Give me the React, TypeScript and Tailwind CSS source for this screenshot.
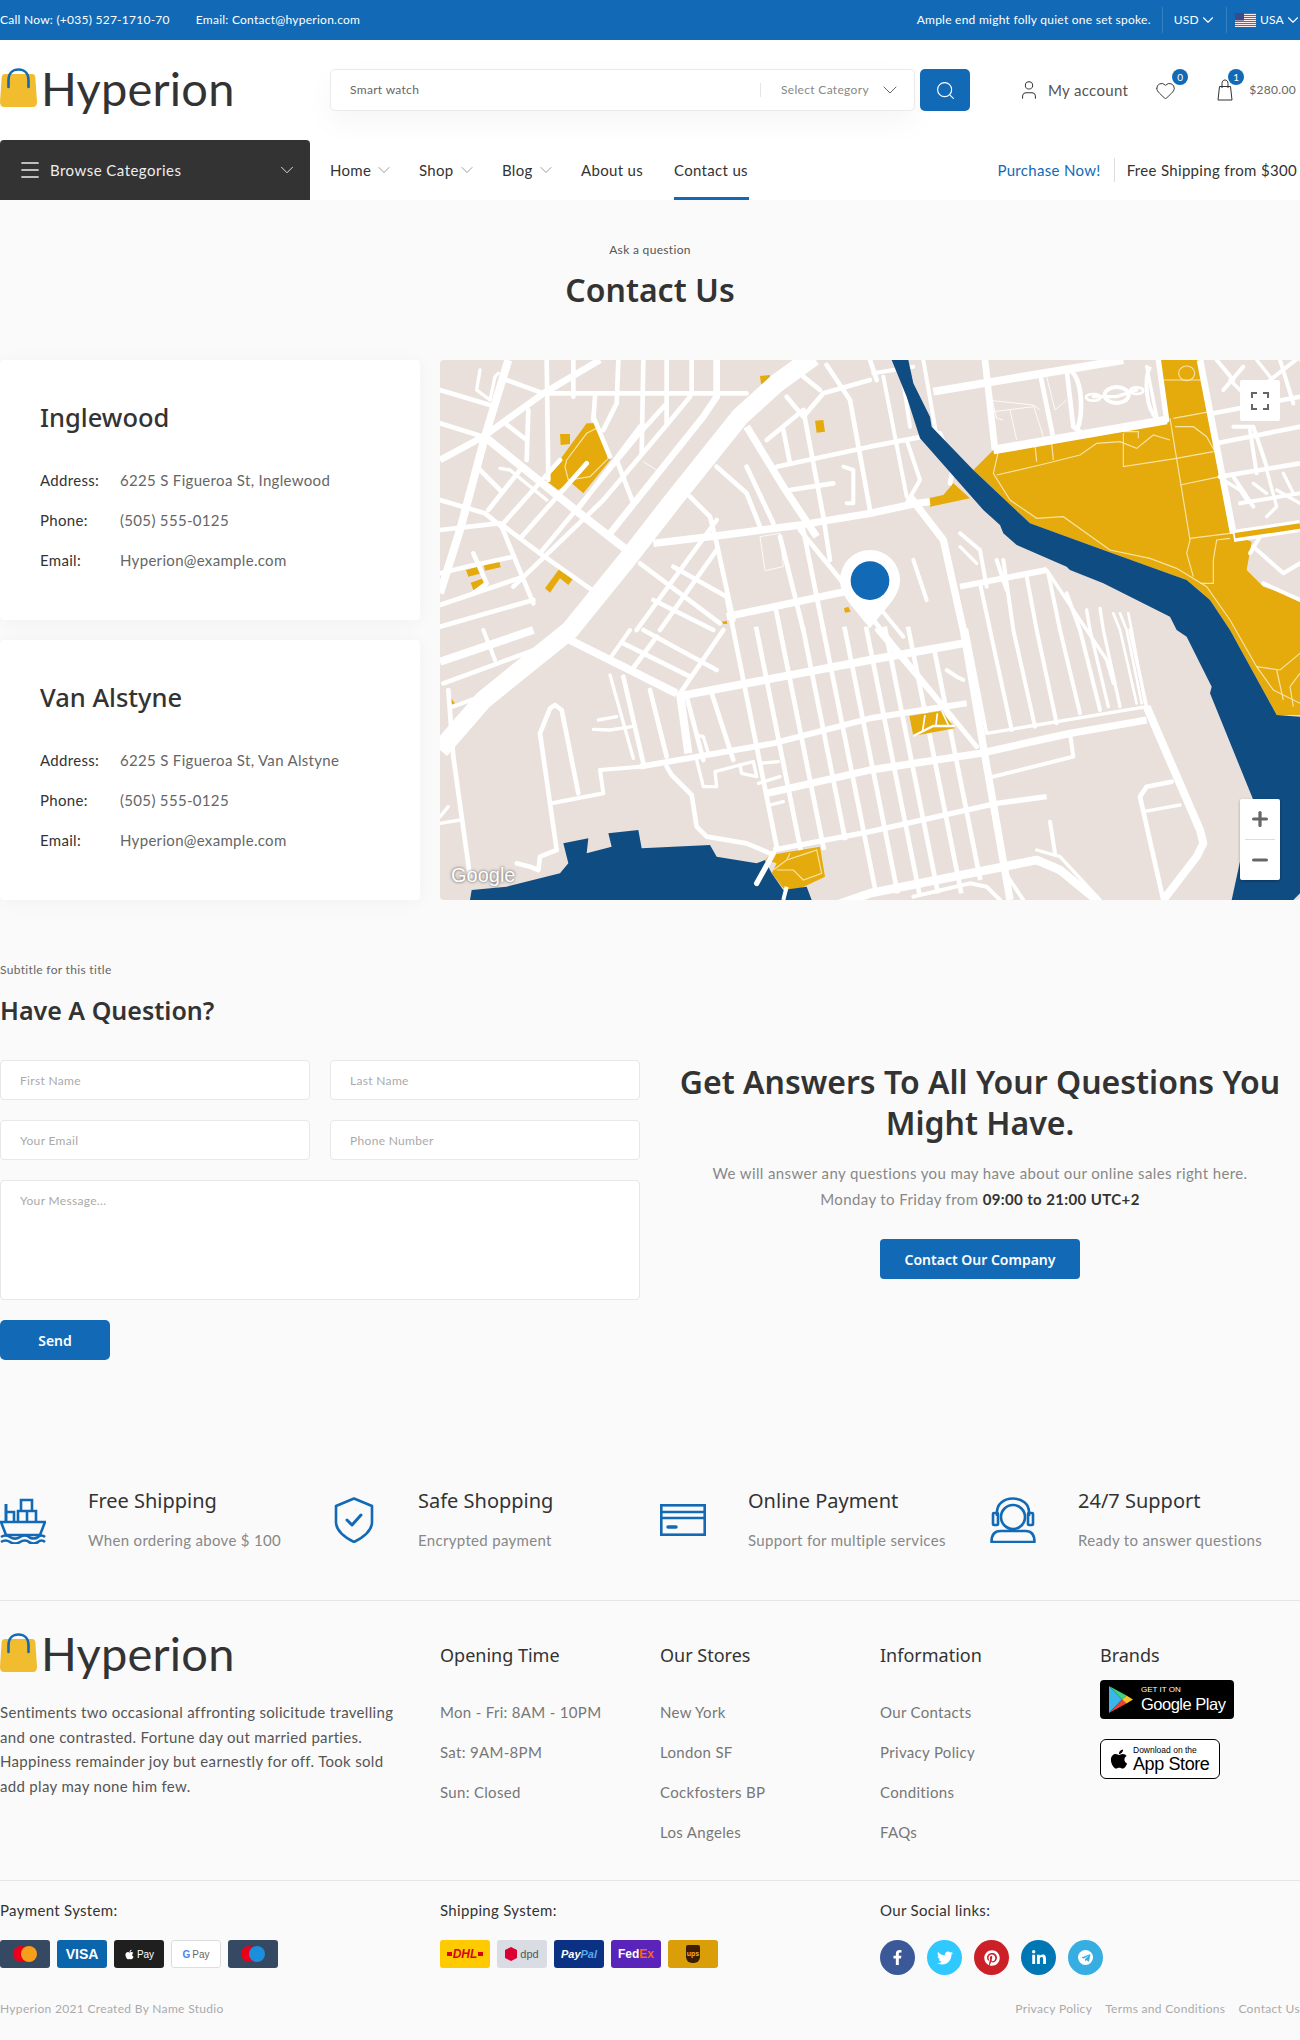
import React from 'react';
import { ChevronDown, Search, User, Heart, Menu, Plus, Minus } from 'lucide-react';
import { FaApple, FaFacebookF, FaTwitter, FaPinterest, FaLinkedinIn, FaTelegramPlane } from 'react-icons/fa';

const heading = "[font-family:'Noto_Sans',sans-serif] tracking-normal";

// map data, in units of 1/3 px over the 860x540 map
const mainRoads: [number, string][] = [
  [56, '1120,-10 1010,70 900,170 700,420 560,600 390,810 130,1020 0,1170'],
  [24, '205,0 135,230 60,510 0,700'],
  [20, '0,300 130,230 310,100 480,0'],
  [24, '140,235 400,445 560,570'],
  [22, '640,550 850,525 1080,495 1290,460 1430,430 1470,425'],
  [22, '920,200 1030,380 1130,530'],
  [22, '1410,410 1510,540 1570,810 1630,1160 1710,1620'],
  [22, '860,770 1190,700 1300,680'],
  [24, '710,1010 1290,900 1570,850'],
  [24, '390,840 710,1000'],
  [18, '600,1220 1000,1150 1290,1075 1580,1030'],
  [22, '980,1300 1290,1230 1620,1180 1890,1120 2120,1080'],
  [16, '1000,1470 1290,1415 1670,1330 1820,1310'],
  [26, '1000,1700 1290,1600 1690,1520 1790,1500 1860,1530 1970,1620'],
  [24, '2120,1040 2150,1110 2280,1410 2290,1450 2270,1490 2170,1620'],
  [24, '0,905 280,810'],
  [24, '1480,95 2050,0'],
  [20, '1635,0 1665,270'],
  [26, '1660,270 2180,180'],
  [20, '2280,0 2380,520'],
  [18, '1560,680 1820,630'],
  [24, '720,1000 745,1180'],
];

const minorRoads: [number, string][] = [
  [14, '0,90 150,135'], [14, '0,190 130,230'], [14, '320,0 325,360'], [14, '200,60 310,100 920,100'],
  [14, '400,0 400,110'], [14, '465,110 460,180'], [14, '535,0 530,130 490,210'], [14, '610,0 605,280'],
  [14, '680,0 680,190'], [14, '755,0 755,100'], [20, '830,0 830,110 790,170 510,520'], [14, '750,110 680,195 490,420 220,680'],
  [14, '145,450 240,330'], [14, '190,490 360,300'], [14, '245,530 440,310'], [14, '300,580 590,230 680,130'],
  [14, '420,440 600,200'], [14, '280,730 185,500 135,460 0,420'], [14, '0,510 175,490'], [14, '0,640 80,620 220,590'],
  [14, '0,735 250,650'], [14, '0,800 280,720'], [14, '180,490 300,580 470,700'], [14, '100,580 140,670 100,700'],
  [14, '110,320 180,390'], [10, '180,325 210,330 320,420'], [10, '120,30 110,90 150,120 165,50 175,40'],
  [14, '195,190 260,240'], [14, '265,150 260,300'], [14, '530,300 580,430'], [14, '460,170 510,290'],
  [14, '1040,110 1090,170 1150,100 1290,60'], [14, '1090,50 1140,90'], [14, '980,240 1090,150'], [14, '1010,320 1290,260'],
  [14, '1050,390 1180,370'], [14, '1160,15 1230,120 1290,450'], [14, '920,320 1000,490'], [14, '830,320 920,400 960,500'],
  [14, '750,410 810,470 830,550 880,780'], [14, '1030,210 1050,310'], [14, '1090,150 1150,470 1170,600'],
  [14, '1020,530 1090,810'], [14, '1090,510 1150,810'], [14, '600,610 840,790'], [14, '590,810 830,480'],
  [14, '700,620 860,710'], [14, '660,810 830,570'], [14, '640,720 820,810'], [14, '1080,510 1610,1160'],
  [14, '1290,0 1310,60'], [14, '1290,260 1500,220 1540,320 1530,370'], [12, '1400,240 1440,360 1400,430'],
  [12, '1210,320 1240,330 1240,430 1220,430'], [12, '1560,520 1620,570 1640,680'], [12, '1670,600 1700,690'],
  [12, '1300,40 1420,20'], [12, '1380,0 1410,200'], [12, '1330,50 1400,410'], [12, '1450,0 1490,230'],
  [12, '1420,600 1460,720'], [12, '1300,720 1390,830'],
  // peninsula and lower left
  [10, '510,945 580,1195'], [14, '550,950 610,1210'], [14, '630,990 680,1190'], [10, '530,1070 475,1080'],
  [10, '575,1100 510,1110 460,1108'], [12, '480,1230 600,1220'], [12, '480,1230 490,1300 335,1330'],
  [14, '415,1300 365,1050 345,1035 330,1045 300,1120 350,1470 300,1490 295,1530'], [14, '25,990 40,1190 90,1550'],
  [10, '0,1390 60,1380'], [10, '0,1370 25,1340'], [14, '680,1220 695,1245 755,1305 770,1400 800,1430 920,1450 990,1480'],
  [10, '770,1200 790,1280 830,1280 825,1235 900,1215 940,1205 950,1250 905,1240 900,1215'],
  [10, '955,1270 1020,1250'], [10, '960,1210 1015,1205'], [10, '990,1335 1030,1325'], [10, '770,1125 790,1130 805,1180'],
  [12, '130,810 165,900'], [14, '10,970 310,860'], [12, '40,1040 170,990'], [12, '510,895 570,810'],
  [14, '550,850 750,950'], [14, '610,810 830,930'], [14, '575,930 650,830'], [14, '720,1000 850,810'],
  [14, '740,1010 790,1200'], [14, '815,1000 880,1200'], [14, '230,1510 270,1520 295,1530'],
  // right of the grid
  [10, '1580,810 1640,1120 2120,1040 2070,810'], [10, '1820,630 1920,780 2000,900 2020,970'],
  [12, '1620,670 1650,810 1715,1110'], [12, '1690,600 1720,810 1785,1100'], [12, '1760,650 1790,810 1850,1090'],
  [12, '1825,640 1860,810 1920,1060'], [12, '1880,700 1920,810 1980,1050'], [10, '1940,750 1950,810 2005,1040'],
  [10, '1980,745 1990,810 2040,1040'], [8, '2020,760 2040,810 2090,1030'], [8, '2040,760 2060,810 2105,1030'],
  [8, '2065,760 2075,810 2115,1030'], [12, '1890,1120 1900,1190 1660,1250'], [12, '1830,1385 1845,1480'],
  [10, '1790,1470 1860,1490 1980,1620'], [12, '1310,810 1610,1160'], [12, '1420,1610 1590,1570 1640,1580 1680,1620'],
  [14, '2195,1265 2120,1280 2100,1310 2170,1620'], [10, '2110,1355 2220,1335'], [12, '1690,1530 1750,1620'],
  [12, '1520,930 1550,950 1570,960'], [10, '1560,560 1610,610'],
  // top right, above the park and past it
  [14, '1880,30 1900,200 1920,215'], [14, '1800,40 1840,235'], [16, '2155,0 2180,180'],
  [10, '1960,110 2030,110 2090,90'], [10, '2120,20 2150,170'], [14, '2320,160 2580,110'], [14, '2330,250 2580,200'],
  [14, '2340,350 2580,310'], [12, '2490,60 2580,-10'], [12, '2350,90 2410,20'],
  [12, '2330,0 2380,60'], [12, '2380,200 2440,200 2480,320'], [12, '2520,0 2560,130'], [12, '2430,210 2450,340'],
  [12, '2400,430 2580,400'], [12, '2380,350 2440,440'], [10, '2480,330 2510,440 2480,470'], [12, '2440,560 2530,640 2580,610'],
  [12, '2470,670 2580,720'], [12, '2430,580 2460,530'], [10, '2510,390 2580,430'], [10, '2350,360 2400,390 2420,420'],
  [10, '2440,370 2480,400'], [10, '2530,340 2560,400'], [10, '2450,0 2490,50'], [10, '2370,60 2430,120'],
];

const gridStreets: [number, number, number][] = [
  [880, 700, 1470], [950, 800, 1470], [1020, 750, 1470], [1090, 800, 1440], [1150, 800, 1600], [1215, 800, 1600],
  [1280, 800, 1600], [1336, 800, 1600], [1406, 800, 1600], [1471, 860, 1560],
];

const parks: string[] = [
  '315,360 440,190 470,190 515,295 430,400 390,365 355,390',
  '360,222 390,222 390,252 362,255',
  '960,48 990,45 988,65 963,72',
  '1125,182 1150,180 1155,215 1130,218',
  '315,685 357,628 398,658 385,675 360,655 330,698',
  '78,630 120,618 125,640 85,650',
  '130,610 178,605 182,622 135,632',
  '92,668 130,655 140,675 100,690',
  '1212,745 1225,740 1232,755 1215,758',
  '845,785 860,782 862,792 850,792',
  '25,1005 45,1030 30,1035',
  // big park on the right
  '1660,270 2180,185 2160,0 2275,0 2370,520 2435,545 2420,630 2470,680 2580,720 2580,1065 2510,1065 2370,810 2310,720 2240,660 1990,570 1770,490 1600,330',
  '1540,370 1590,415 1470,440 1465,415 1510,405',
  '975,1500 990,1485 1140,1460 1155,1550 1060,1595 1030,1585 995,1540 1010,1510',
];

const parkPaths: string[] = [
  '380,300 440,220 470,205 490,240 505,295 450,350 385,360 375,320 380,300',
  '2172,60 2290,60', '2200,175 2310,155', '1675,275 1660,340 1710,420 1790,475 1870,470 2010,570 2130,595 2210,625 2300,680 2370,780 2450,920 2500,990 2580,1030',
  '1670,345 1800,315 1920,285 1970,250 2040,245 2090,265 2140,225 2190,240', '1785,255 1790,305', '1835,250 1840,300',
  '2050,215 2095,215 2095,235', '2050,220 2050,320 2210,295 2320,275', '2190,175 2250,540 2240,580 2260,650',
  '2205,200 2260,200 2300,230 2325,275', '2220,375 2340,350', '2250,535 2370,520', '2370,535 2330,540 2320,600 2320,670 2280,670',
  '2450,920 2520,930 2580,880', '2510,930 2530,1020', '2580,940 2550,980 2560,1040',
  '1000,1530 1040,1500 1100,1480 1130,1470 1145,1540 1090,1560 1060,1530 1010,1530', '1040,1500 1050,1480',
];

const thinLines: string[] = [
  '610,305 650,330', '960,530 1020,520 1030,620 975,632 960,530', '1640,120 1780,135 1800,150', '1660,155 1780,140',
  '1710,150 1730,240', '1780,135 1810,230', '1820,50 1845,150 1880,120', '1650,90 1670,175 1690,180',
];

const MapDrawing: React.FC = () => (
  <svg viewBox="0 0 2580 1620" className="w-full h-full block">
    <rect width="2580" height="1620" fill="#e9e0db" />
    {parks.map((p, i) => <polygon key={i} points={p} fill="#e5ab0c" />)}
    {parkPaths.map((p, i) => <polyline key={i} points={p} fill="none" stroke="#f7e3a6" strokeWidth="3.5" />)}
    {minorRoads.map(([w, p], i) => <polyline key={i} points={p} fill="none" stroke="#fff" strokeWidth={w} strokeLinejoin="round" strokeLinecap="round" />)}
    {gridStreets.map(([x, y0, y1], i) => (
      <line key={i} x1={x + (y0 - 810) * 0.2} y1={y0} x2={x + (y1 - 810) * 0.2} y2={y1} stroke="#fff" strokeWidth="14" />
    ))}
    {mainRoads.map(([w, p], i) => <polyline key={i} points={p} fill="none" stroke="#fff" strokeWidth={w} strokeLinejoin="round" />)}
    {thinLines.map((p, i) => <polyline key={i} points={p} fill="none" stroke="#fff" strokeWidth="2.5" />)}
    {/* small square with paths, over the grid */}
    <polygon points="1408,1068 1505,1052 1545,1105 1420,1128" fill="#e5ab0c" />
    <polyline points="1420,1128 1480,1098 1545,1098" fill="none" stroke="#fff" strokeWidth="7" />
    <polyline points="1455,1065 1448,1112" fill="none" stroke="#fff" strokeWidth="5" />
    <polyline points="1492,1060 1488,1095" fill="none" stroke="#fff" strokeWidth="5" />
    <polyline points="1505,1052 1525,1095" fill="none" stroke="#fff" strokeWidth="5" />
    {/* road with a stripe of park down its middle */}
    <polyline points="2380,528 2580,498" fill="none" stroke="#fff" strokeWidth="36" />
    <polyline points="2385,527 2580,498" fill="none" stroke="#e5ab0c" strokeWidth="16" />
    {/* ring road beside the park */}
    <ellipse cx="2030" cy="105" rx="36" ry="24" fill="none" stroke="#fff" strokeWidth="12" />
    <ellipse cx="1960" cy="112" rx="22" ry="10" fill="none" stroke="#fff" strokeWidth="8" />
    <ellipse cx="2090" cy="92" rx="20" ry="10" fill="none" stroke="#fff" strokeWidth="8" />
    <path d="M1890 30 C1930 60 1930 170 1910 210" fill="none" stroke="#fff" strokeWidth="14" />
    <path d="M2130 20 C2110 60 2120 150 2150 175" fill="none" stroke="#fff" strokeWidth="12" />
    <ellipse cx="2240" cy="40" rx="24" ry="22" fill="none" stroke="#f7e3a6" strokeWidth="3.5" />
    {/* river and harbour */}
    <polygon
      fill="#0f4c81"
      points="1355,0 1405,0 1420,70 1470,170 1475,200 1600,330 1770,490 1990,570 2240,660 2310,720 2370,810 2510,1065 2580,1070 2580,1600 2560,1620 2375,1620 2440,1320 2310,1000 2315,980 2240,830 2210,810 2190,770 1990,670 1890,630 1880,620 1730,555 1690,520 1680,495 1630,450 1440,235 1400,110"
    />
    <polygon
      fill="#0f4c81"
      points="95,1590 200,1580 360,1540 385,1510 370,1450 445,1435 440,1480 515,1460 505,1420 595,1410 605,1465 810,1455 830,1490 950,1510 975,1500 995,1540 1030,1590 1100,1580 1115,1620 90,1620"
    />
    <polyline points="1000,1480 950,1570" fill="none" stroke="#fff" strokeWidth="16" strokeLinecap="round" />
    <polyline points="1040,1580 1030,1620" fill="none" stroke="#fff" strokeWidth="12" />
    {/* pin */}
    <path d="M1290 805 C1230 730 1200 705 1200 660 A90 90 0 0 1 1380 660 C1380 705 1350 730 1290 805Z" fill="#fff" />
    <circle cx="1290" cy="662" r="58" fill="#126ab6" />
  </svg>
);

const Logo: React.FC = () => (
  <div className="flex items-start h-[57px] w-[240px]">
    <svg width="37" height="40" viewBox="0 0 37 40">
      <path d="M5 6h27c2 0 3 1 3.300 3l1.700 25c0 3-1.500 5-4 5H4c-2.500 0-4-2-4-5L1.700 9C2 7 3 6 5 6Z" fill="#f2bc2f" />
      <path d="M8.500 19 V12 C8.500 5 13 1.500 18.500 1.500 C24 1.500 28.500 5 28.500 12 V19" fill="none" stroke="#126ab6" strokeWidth="2.600" strokeLinecap="round" />
    </svg>
    <span className="ml-[4px] -mt-[5px] text-[47px] leading-[50px] font-normal text-[#333] tracking-[0.2px]">Hyperion</span>
  </div>
);

const Flag: React.FC = () => (
  <svg width="21" height="14" viewBox="0 0 21 14" className="block">
    <rect width="21" height="14" fill="#fff" />
    {[0, 2, 4, 6, 8, 10, 12].map(y => <rect key={y} y={y} width="21" height="1.100" fill="#e0393e" />)}
    <rect width="9" height="7.500" fill="#3d4a8a" />
  </svg>
);

const TopBar: React.FC = () => (
  <div className="h-10 bg-[#126ab6] text-white text-[12px] tracking-[0.25px] flex items-center justify-between">
    <div className="flex gap-[26px]">
      <span>Call Now: (+035) 527-1710-70</span>
      <span>Email: Contact@hyperion.com</span>
    </div>
    <div className="flex items-center h-[26px]">
      <span>Ample end might folly quiet one set spoke.</span>
      <span className="w-px h-[26px] bg-white/15 ml-[11px]" />
      <span className="ml-[11px] flex items-center">USD <ChevronDown size={18} strokeWidth={1.500} /></span>
      <span className="w-px h-[26px] bg-white/15 ml-[9px]" />
      <span className="ml-[8px]"><Flag /></span>
      <span className="ml-[4px] -mr-[2px] flex items-center">USA <ChevronDown size={18} strokeWidth={1.500} /></span>
    </div>
  </div>
);

const Header: React.FC = () => (
  <div className="h-[100px] bg-white flex pt-[29px]">
    <div className="-mt-[1px]"><Logo /></div>
    <div className="ml-[90px] w-[585px] h-[42px] bg-white border border-[#eaeaea] rounded-[5px] flex items-center shadow-[0_12px_30px_rgba(0,0,0,0.04)] text-[12px]">
      <span className="ml-[19px] w-[410px] text-[#666]">Smart watch</span>
      <span className="w-px h-[14px] bg-[#e5e5e5]" />
      <span className="ml-[20px] w-[97px] text-[#888]">Select Category</span>
      <ChevronDown size={24} strokeWidth={1} className="text-[#666]" />
    </div>
    <button className="ml-[5px] w-[50px] h-[42px] bg-[#126ab6] rounded-[5px] flex items-center justify-center text-white">
      <Search size={21} strokeWidth={1.300} />
    </button>
    <div className="ml-[48px] h-[42px] flex items-center text-[#555]">
      <User size={22} strokeWidth={1.100} className="text-[#333]" />
      <span className="ml-[8px] text-[15px]">My account</span>
    </div>
    <div className="ml-[27px] h-[42px] flex items-center relative">
      <Heart size={21} strokeWidth={1.100} className="text-[#333]" />
      <span className="absolute left-[17px] top-0 w-4 h-4 rounded-full bg-[#126ab6] text-white text-[10px] tracking-normal flex items-center justify-center">0</span>
    </div>
    <div className="ml-[41px] h-[42px] flex items-center relative">
      <svg width="16" height="22" viewBox="0 0 16 22" fill="none" stroke="#333" strokeWidth="1">
        <path d="M2.500 7.500h11L15 21H1Z" />
        <path d="M5 9V4.500C5 2 6.500 1 8 1s3 1 3 3.500V9" />
      </svg>
      <span className="absolute left-[11px] top-0 w-4 h-4 rounded-full bg-[#126ab6] text-white text-[10px] tracking-normal flex items-center justify-center">1</span>
      <span className="ml-[16px] text-[12px] text-[#666]">$280.00</span>
    </div>
  </div>
);

const NavItem: React.FC<{ label: string; className: string }> = ({ label, className }) => (
  <div className={`flex items-center gap-[3px] ${className}`}>
    {label}
    <ChevronDown size={20} strokeWidth={1} className="text-[#888]" />
  </div>
);

const NavBar: React.FC = () => (
  <div className="h-[60px] bg-white flex items-center text-[15px] text-[#333] relative pr-[3px]">
    <div className="w-[310px] h-[60px] bg-[#333] rounded-t-[4px] text-[#eee] flex items-center pl-[18px]">
      <Menu size={24} strokeWidth={1.700} />
      <span className="ml-[8px] w-[226px] tracking-[0.47px]">Browse Categories</span>
      <ChevronDown size={22} strokeWidth={1} />
    </div>
    <NavItem label="Home" className="ml-[20px] w-[89px]" />
    <NavItem label="Shop" className="w-[83px]" />
    <NavItem label="Blog" className="w-[79px]" />
    <div className="w-[93px]">About us</div>
    <div className="w-[75px] h-[60px] flex items-center border-b-[3px] border-[#126ab6] whitespace-nowrap pt-[3px]">Contact us</div>
    <div className="ml-auto text-[#126ab6] whitespace-nowrap">Purchase Now!</div>
    <span className="ml-[13px] w-px h-6 bg-[#ddd]" />
    <div className="ml-[12px] whitespace-nowrap">Free Shipping from $300</div>
  </div>
);

const rowClass = 'flex h-[40px] items-center text-[15px]';

const StoreCard: React.FC<{ title: string; address: string }> = ({ title, address }) => (
  <div className="w-[420px] h-[260px] bg-white rounded-[4px] shadow-[0_2px_20px_rgba(0,0,0,0.04)] pl-10 pt-[37px]">
    <h3 className={`${heading} text-[25.500px] leading-[40px] font-medium text-[#333] mb-[23px]`}>{title}</h3>
    <div className={rowClass}><span className="w-20 text-[#333]">Address:</span><span className="text-[#666]">{address}</span></div>
    <div className={rowClass}><span className="w-20 text-[#333]">Phone:</span><span className="text-[#666]">(505) 555-0125</span></div>
    <div className={rowClass}><span className="w-20 text-[#333]">Email:</span><span className="text-[#666]">Hyperion@example.com</span></div>
  </div>
);

const MapPanel: React.FC = () => (
  <div className="ml-5 w-[860px] h-[540px] relative overflow-hidden rounded-[4px]">
    <MapDrawing />
    <div className="absolute top-[20px] right-[20px] w-10 h-[41px] bg-white rounded-[2px] flex items-center justify-center">
      <svg width="18" height="18" viewBox="0 0 18 18" fill="none" stroke="#666" strokeWidth="2">
        <path d="M1 6V1h5M12 1h5v5M17 12v5h-5M6 17H1v-5" />
      </svg>
    </div>
    <div className="absolute bottom-[20px] right-[20px] w-10 h-[81px] bg-white rounded-[2px] shadow-[0_1px_3px_rgba(0,0,0,0.3)] flex flex-col items-center text-[#666]">
      <div className="h-10 flex items-center justify-center"><Plus size={22} strokeWidth={3.500} /></div>
      <div className="w-[30px] h-px bg-[#ddd]" />
      <div className="h-10 flex items-center justify-center"><Minus size={22} strokeWidth={3.500} /></div>
    </div>
    <span className="absolute left-[11px] bottom-[12px] text-[20px] leading-[26px] tracking-normal text-white [font-family:'Liberation_Sans',sans-serif] [text-shadow:0_0_3px_rgba(0,0,0,0.7)]">Google</span>
  </div>
);

const inputClass = 'h-10 bg-white border border-[#e8e8e8] rounded-[4px] flex items-center pl-[19px] pt-px text-[12px] text-[#aaa]';

const QuestionForm: React.FC = () => (
  <div className="w-[640px]">
    <p className="text-[12px] leading-[16px] text-[#666]">Subtitle for this title</p>
    <h2 className={`${heading} text-[25px] leading-[32px] font-semibold text-[#333] mt-[16px]`}>Have A Question?</h2>
    <div className="grid grid-cols-2 gap-x-5 gap-y-5 mt-[34px]">
      <div className={inputClass}>First Name</div>
      <div className={inputClass}>Last Name</div>
      <div className={inputClass}>Your Email</div>
      <div className={inputClass}>Phone Number</div>
      <div className="col-span-2 h-[120px] bg-white border border-[#e8e8e8] rounded-[4px] pl-[19px] pt-[11px] text-[12px] text-[#aaa]">Your Message...</div>
    </div>
    <button className={`${heading} mt-5 w-[110px] h-10 bg-[#126ab6] rounded-[5px] text-white text-[14px] font-semibold`}>Send</button>
  </div>
);

const AnswersPanel: React.FC = () => (
  <div className="ml-5 w-[640px] pt-[99px] text-center">
    <h2 className={`${heading} text-[32px] leading-[41px] font-semibold text-[#333]`}>Get Answers To All Your Questions You<br />Might Have.</h2>
    <p className="mt-[17px] text-[15px] leading-[26px] text-[#888] tracking-[0.38px]">
      We will answer any questions you may have about our online sales right here.<br />
      Monday to Friday from <span className="font-bold text-[#333]">09:00 to 21:00 UTC+2</span>
    </p>
    <button className={`${heading} mt-[27px] w-[200px] h-10 bg-[#126ab6] rounded-[4px] text-white text-[14px] font-semibold`}>Contact Our Company</button>
  </div>
);

const ShipIcon = () => (
  <svg width="46" height="48" viewBox="0 0 46 48" fill="none" stroke="#126ab6" strokeWidth="2.600">
    <path d="M6 26V8" strokeWidth="3" />
    <path d="M5 16h9v10" />
    <path d="M18 26V15h9v11M21 15V4h11v11M27 15h9v11" />
    <path d="M1 26h44l-5 13H6Z" />
    <path d="M1 41c3-2 6-2 9 0s7 2 10 0 7-2 9 0 7 2 9 0 5-2 7 0M1 46c3-2 6-2 9 0s7 2 10 0 7-2 9 0 7 2 9 0 5-2 7 0" />
  </svg>
);

const ShieldIcon = () => (
  <svg width="40" height="46" viewBox="0 0 40 46" fill="none" stroke="#126ab6" strokeWidth="2.600" strokeLinejoin="round" strokeLinecap="round">
    <path d="M20 1.500 38 9v16c0 9-8 15-18 20C10 40 2 34 2 25V9Z" />
    <path d="M13 23l5 5 9-10" strokeWidth="3" />
  </svg>
);

const CardIcon = () => (
  <svg width="46" height="32" viewBox="0 0 46 32" fill="none" stroke="#126ab6" strokeWidth="2.600">
    <rect x="1.300" y="1.300" width="43.400" height="29.400" />
    <path d="M1 8h44M1 14h44" />
    <path d="M8 23h8" strokeWidth="3.500" strokeLinecap="round" />
  </svg>
);

const SupportIcon = () => (
  <svg width="46" height="46" viewBox="0 0 46 46" fill="none" stroke="#126ab6" strokeWidth="2.600" strokeLinejoin="round">
    <path d="M7 19v-4C7 7 14 1.500 23 1.500S39 7 39 15v4" />
    <rect x="3" y="16" width="5" height="12" rx="1" />
    <rect x="38" y="16" width="5" height="12" rx="1" />
    <circle cx="23" cy="20" r="12" />
    <path d="M1.500 45c0-8 4-11 9-11h25c5 0 9 3 9 11Z" />
  </svg>
);

const features = [
  { title: 'Free Shipping', text: 'When ordering above $ 100', icon: <ShipIcon />, box: 'w-[88px]' },
  { title: 'Safe Shopping', text: 'Encrypted payment', icon: <ShieldIcon />, box: 'w-[88px] pl-[4px]' },
  { title: 'Online Payment', text: 'Support for multiple services', icon: <CardIcon />, box: 'w-[88px]' },
  { title: '24/7 Support', text: 'Ready to answer questions', icon: <SupportIcon />, box: 'w-[88px]' },
];

const Features: React.FC = () => (
  <div className="h-[131px] border-b border-[#e6e6e6] grid grid-cols-[330px_330px_330px_310px] pt-[17px]">
    {features.map(f => (
      <div key={f.title} className="flex">
        <div className={`${f.box} h-[65px] flex items-center`}>{f.icon}</div>
        <div>
          <p className={`${heading} text-[20px] leading-[28px] text-[#333]`}>{f.title}</p>
          <p className="mt-[15px] text-[15px] leading-[20px] text-[#888]">{f.text}</p>
        </div>
      </div>
    ))}
  </div>
);

const FooterCol: React.FC<{ title: string; items: string[] }> = ({ title, items }) => (
  <div className="w-[220px]">
    <h4 className={`${heading} text-[18px] leading-[26px] text-[#333]`}>{title}</h4>
    <ul className="mt-[24px] text-[15px] text-[#777]">
      {items.map(i => <li key={i} className="h-10 flex items-center">{i}</li>)}
    </ul>
  </div>
);

const GooglePlayBadge = () => (
  <div className="w-[134px] h-[39px] bg-black rounded-[4px] flex items-center pl-[9px] text-white tracking-normal">
    <svg width="24" height="27" viewBox="0 0 24 27">
      <path d="M0 0 13 13.500 0 27Z" fill="#3bb6e8" />
      <path d="M0 0 17.500 9.500 13 13.500Z" fill="#3fd37c" />
      <path d="M0 27 17.500 17.500 13 13.500Z" fill="#ea4335" />
      <path d="M17.500 9.500 24 13.500 17.500 17.500 13 13.500Z" fill="#fbc02d" />
    </svg>
    <div className="ml-[8px] [font-family:'Liberation_Sans',sans-serif]">
      <p className="text-[8px] leading-[9px]">GET IT ON</p>
      <p className="text-[16.500px] leading-[20px] tracking-[-0.5px]">Google Play</p>
    </div>
  </div>
);

const AppStoreBadge = () => (
  <div className="w-[120px] h-[40px] bg-white border border-black rounded-[6px] flex items-center pl-[7px] text-black tracking-normal">
    <FaApple size={22} />
    <div className="ml-[3px] [font-family:'Liberation_Sans',sans-serif]">
      <p className="text-[8.500px] leading-[10px]">Download on the</p>
      <p className="text-[18px] leading-[19px] tracking-[-0.4px] font-medium">App Store</p>
    </div>
  </div>
);

const Circles: React.FC<{ left: string; right: string }> = ({ left, right }) => (
  <svg width="24" height="16" viewBox="0 0 24 16">
    <circle cx="8" cy="8" r="8" fill={left} />
    <circle cx="16" cy="8" r="8" fill={right} />
  </svg>
);

const payBox = 'w-[50px] h-[28px] rounded-[3px] flex items-center justify-center tracking-normal [font-family:\'Liberation_Sans\',sans-serif]';

const Footer: React.FC = () => (
  <div>
    <div className="h-[280px] border-b border-[#e6e6e6] flex pt-[32px]">
      <div className="w-[440px]">
        <Logo />
        <p className="mt-[10px] text-[15px] leading-[24.600px] text-[#555] whitespace-nowrap">
          Sentiments two occasional affronting solicitude travelling<br />
          and one contrasted. Fortune day out married parties.<br />
          Happiness remainder joy but earnestly for off. Took sold<br />
          add play may none him few.
        </p>
      </div>
      <div className="flex pt-[9px]">
        <FooterCol title="Opening Time" items={['Mon - Fri: 8AM - 10PM', 'Sat: 9AM-8PM', 'Sun: Closed']} />
        <FooterCol title="Our Stores" items={['New York', 'London SF', 'Cockfosters BP', 'Los Angeles']} />
        <FooterCol title="Information" items={['Our Contacts', 'Privacy Policy', 'Conditions', 'FAQs']} />
        <div>
          <h4 className={`${heading} text-[18px] leading-[26px] text-[#333]`}>Brands</h4>
          <div className="mt-[12px] flex flex-col gap-5">
            <GooglePlayBadge />
            <AppStoreBadge />
          </div>
        </div>
      </div>
    </div>
    <div className="flex pt-[19px] h-[107px]">
      <div className="w-[440px]">
        <p className="text-[15px] leading-[20px] text-[#333]">Payment System:</p>
        <div className="flex gap-[7px] mt-[20px]">
          <div className={`${payBox} bg-[#364962]`}><Circles left="#eb001b" right="#f79e1b" /></div>
          <div className={`${payBox} bg-[#0b65ad] text-white text-[14px] font-bold`}>VISA</div>
          <div className={`${payBox} bg-[#1f1f1f] text-white text-[10px] gap-[2px]`}><FaApple size={11} />Pay</div>
          <div className={`${payBox} bg-white border border-[#ddd] text-[#666] text-[10px] gap-[2px]`}><span className="text-[#4285f4] font-bold">G</span>Pay</div>
          <div className={`${payBox} bg-[#364962]`}><Circles left="#eb001b" right="#1b8fdc" /></div>
        </div>
      </div>
      <div className="w-[440px]">
        <p className="text-[15px] leading-[20px] text-[#333]">Shipping System:</p>
        <div className="flex gap-[7px] mt-[20px]">
          <div className={`${payBox} bg-[#ffcb00] text-[#d40511] text-[12px] font-bold italic gap-[1px]`}>
            <span className="w-[5px] h-[4px] bg-[#d40511]" />DHL<span className="w-[5px] h-[4px] bg-[#d40511]" />
          </div>
          <div className={`${payBox} bg-[#d9dce3] text-[#555] text-[11px] gap-[3px]`}>
            <svg width="12" height="14" viewBox="0 0 12 14"><path d="M6 0l6 3v8l-6 3-6-3V3Z" fill="#dc0032" /></svg>dpd
          </div>
          <div className={`${payBox} bg-[#0a3184] text-[11px] font-bold italic`}><span className="text-white">Pay</span><span className="text-[#5aa9e6]">Pal</span></div>
          <div className={`${payBox} bg-[#5a23b9] text-[12px] font-bold`}><span className="text-white">Fed</span><span className="text-[#ff6600]">Ex</span></div>
          <div className={`${payBox} bg-[#d99e08]`}>
            <div className="w-[14px] h-[18px] bg-[#3b1d06] rounded-b-[6px] rounded-t-[2px] flex items-center justify-center text-[#f2b51c] text-[7px] font-bold">ups</div>
          </div>
        </div>
      </div>
      <div>
        <p className="text-[15px] leading-[20px] text-[#333]">Our Social links:</p>
        <div className="flex gap-3 mt-[20px] text-white">
          <span className="w-[35px] h-[35px] rounded-full bg-[#3b5998] flex items-center justify-center"><FaFacebookF size={15} /></span>
          <span className="w-[35px] h-[35px] rounded-full bg-[#2fc9ff] flex items-center justify-center"><FaTwitter size={16} /></span>
          <span className="w-[35px] h-[35px] rounded-full bg-[#cb2027] flex items-center justify-center"><FaPinterest size={16} /></span>
          <span className="w-[35px] h-[35px] rounded-full bg-[#0077b5] flex items-center justify-center"><FaLinkedinIn size={16} /></span>
          <span className="w-[35px] h-[35px] rounded-full bg-[#37aee2] flex items-center justify-center">
            <span className="w-[15px] h-[15px] rounded-full bg-white flex items-center justify-center text-[#37aee2]"><FaTelegramPlane size={10} /></span>
          </span>
        </div>
      </div>
    </div>
    <div className="flex justify-between text-[12px] leading-[16px] text-[#aaa] pt-[13px]">
      <span>Hyperion 2021 Created By Name Studio</span>
      <div className="flex gap-[13px]">
        <span>Privacy Policy</span>
        <span>Terms and Conditions</span>
        <span>Contact Us</span>
      </div>
    </div>
  </div>
);

const App: React.FC = () => (
  <div className="w-[1300px] h-[2040px] overflow-hidden bg-[#fafafa] tracking-[0.32px] [font-family:Lato,sans-serif]">
    <TopBar />
    <Header />
    <NavBar />
    <div className="pt-[42px] h-[160px] text-center">
      <p className="text-[12px] leading-[16px] text-[#555]">Ask a question</p>
      <h1 className={`${heading} mt-[10px] text-[32px] leading-[44px] font-semibold text-[#333]`}>Contact Us</h1>
    </div>
    <div className="flex h-[540px]">
      <div className="flex flex-col gap-5">
        <StoreCard title="Inglewood" address="6225 S Figueroa St, Inglewood" />
        <StoreCard title="Van Alstyne" address="6225 S Figueroa St, Van Alstyne" />
      </div>
      <MapPanel />
    </div>
    <div className="flex h-[570px] pt-[62px]">
      <QuestionForm />
      <AnswersPanel />
    </div>
    <Features />
    <Footer />
  </div>
);

export default App;
